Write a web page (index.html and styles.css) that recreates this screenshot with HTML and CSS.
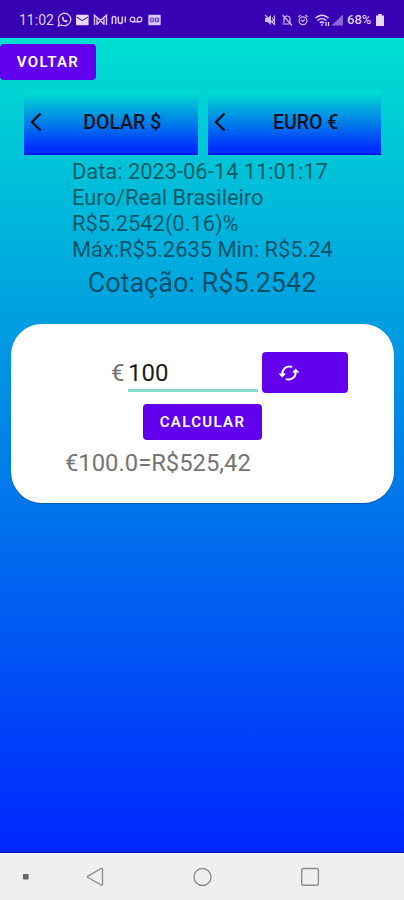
FILE: index.html
```html
<!DOCTYPE html>
<html lang="pt-BR">
  <head>
    <meta charset="UTF-8" />
    <meta name="viewport" content="width=device-width, initial-scale=1" />
    <title>Cotação</title>
    <link rel="stylesheet" href="styles.css">
  </head>

  <body>
    <header class="status">
      <span class="clock">11:02</span>
      <svg class="status-left" width="106" height="16" viewBox="0 0 106 16" fill="none" stroke="#d9c8f5" stroke-width="1.3">
        <!-- whatsapp -->
        <path d="M1.300 14l1-3.300a6.200 6.200 0 1 1 2.500 2.300z" />
        <path d="M5 5.200c-.6 2.800 2 5.400 5 5l.6-1.600-1.700-.8-.9.800-1.600-1.700.6-1-.7-1.400z" fill="#d9c8f5" stroke="none" />
        <!-- mail -->
        <rect x="19" y="2.700" width="12.600" height="10.600" rx="1" fill="#e4d9f8" stroke="none" />
        <path d="M19.500 5l5.800 3.600L31 5" stroke="#3700b3" stroke-width="1" />
        <!-- gmail -->
        <path d="M37.500 13V3.300l6 5 6-5V13M40 13V6.500M47 13V6.500M39.500 12.500l4-3.500 4 3.500" stroke-width="1.400" />
        <!-- nubank -->
        <path d="M55.300 12V6.500q0-2 1.700-2t1.700 2V12M61.300 4.500V9q0 2.400 2 2.400t2-2.400V4.500v6.700M68.300 4.500v6" stroke-width="1.500" />
        <!-- voicemail -->
        <circle cx="75.500" cy="7.500" r="2.300" />
        <circle cx="82.500" cy="7.500" r="2.300" />
        <path d="M75.500 9.800h7" />
        <!-- news -->
        <rect x="91.300" y="2.700" width="12.400" height="10.600" rx="1" fill="#d9c8f5" stroke="none" />
        <path d="M93.300 6h3.400v3.800h-3.400zM98.300 6h3.400v3.800h-3.400zM93.300 8h3M98.300 8h3" stroke="#5d32c0" stroke-width=".9" />
      </svg>
      <svg class="status-right" width="82" height="16" viewBox="0 0 82 16" fill="none" stroke="#cdb9f2" stroke-width="1.2">
        <!-- muted -->
        <path d="M1 6h2.500L7 3v10L3.500 10H1z" fill="#cdb9f2" stroke="none" />
        <path d="M1 3l10 10M8.500 5.500q1.500 2 0 4.500M10.500 3.500v9" />
        <!-- alerts off -->
        <path d="M18.500 12h9M20 11V7q0-3 3-3t3 3v4M18.500 3l9.500 10.500" />
        <!-- alarm -->
        <circle cx="39" cy="8.800" r="3.900" />
        <path d="M34.500 5l2-2M43.500 5l-2-2M37 8l2 1.500L41 7" />
        <!-- wifi -->
        <path d="M51.500 6q6.500-5.500 13 0M53.500 8.500q4.500-3.700 9 0M55.800 10.800q2.200-1.700 4.400 0" stroke="#e4d9f8" stroke-width="1.400" />
        <path d="M58 11.500v2.500M62 10v4M64.500 10v4" stroke="#e4d9f8" />
        <!-- signal -->
        <path d="M67.500 13.500L79 2.500v11z" fill="#8b68d6" stroke="none" />
      </svg>
      <span class="battery-level">68%</span>
      <svg class="battery" width="8" height="12" viewBox="0 0 8 12" fill="#e4d9f8">
        <path d="M2.300 0h3.400v1.500H8V12H0V1.500h2.300z" />
      </svg>
    </header>

    <main class="screen">
      <button type="button" class="btn back">VOLTAR</button>

      <div class="tabs">
        <button type="button" class="tab">
          <svg class="chevron" width="12" height="20" viewBox="0 0 12 20"><path d="M10.500 1.500L2 10l8.500 8.500" /></svg>
          <span class="tab-label">DOLAR $</span>
        </button>
        <button type="button" class="tab">
          <svg class="chevron" width="12" height="20" viewBox="0 0 12 20"><path d="M10.500 1.500L2 10l8.500 8.500" /></svg>
          <span class="tab-label">EURO €</span>
        </button>
      </div>

      <div class="info">
        <div>Data: 2023-06-14 11:01:17</div>
        <div>Euro/Real Brasileiro</div>
        <div>R$5.2542(0.16)%</div>
        <div>Máx:R$5.2635 Min: R$5.24</div>
      </div>
      <div class="rate">Cotação: R$5.2542</div>

      <section class="card">
        <div class="amount">
          <label for="valor">€</label>
          <input type="text" id="valor" name="valor" value="100" />
          <button type="button" class="btn swap" aria-label="Trocar">
            <svg width="22" height="18" viewBox="0 0 22 18" fill="none" stroke="#fff" stroke-width="2">
              <path d="M4.300 10.500C4 5 8.500 1.200 14.300 2.900M17.700 7.500C18 13 13.500 16.800 7.700 15.100" />
              <path d="M.5 9.500h7.600l-3.800 4zM13.900 8.500h7.600l-3.800-4z" fill="#fff" stroke="none" />
            </svg>
          </button>
        </div>
        <button type="button" class="btn calc">CALCULAR</button>
        <div class="result">€100.0=R$525,42</div>
      </section>
    </main>

    <nav class="navbar">
      <svg width="404" height="47" viewBox="0 0 404 47" fill="none" stroke="#8c8c8c" stroke-width="1.400">
        <rect x="23" y="21" width="5.500" height="5.500" fill="#666" stroke="none" />
        <path d="M101 15.500q1.500-.8 1.500 1v14.500q0 1.800-1.500 1L88 24.500q-1-.7 0-1.400z" />
        <circle cx="202.500" cy="24" r="8.500" />
        <rect x="301.700" y="15.500" width="16.700" height="16.700" rx="1.800" />
      </svg>
    </nav>
  </body>
</html>
```

FILE: styles.css
```css
* {
  box-sizing: border-box;
}

body {
  margin: 0;
  height: 900px;
  display: flex;
  flex-direction: column;
  overflow: hidden;
  font-family: Roboto, "Liberation Sans", sans-serif;
}

button {
  border: 0;
  padding: 0;
  font-family: inherit;
}

.status {
  height: 38px;
  display: flex;
  align-items: center;
  padding: 1px 20px 0 19px;
  background: #3700b3;
  color: #dccff6;
  font-size: 14px;
}

.clock {
  width: 38px;
}

.status-right {
  margin-left: auto;
}

.battery-level {
  width: 27px;
  margin: 0 2px 0 1px;
  font-size: 13px;
  font-weight: 500;
}

.screen {
  height: 815px;
  padding-top: 6px;
  background: linear-gradient(#00dfd1, #0026ff);
  border-bottom: 1px solid #0a14cc;
}

.btn {
  display: block;
  background: #6200ee;
  color: #fff;
  border-radius: 4px;
  font-size: 15px;
  font-weight: 600;
  letter-spacing: 1.35px;
}

.back {
  width: 96px;
  height: 36px;
}

.tabs {
  display: flex;
  gap: 10px;
  margin: 10px 23px 0 24px;
}

.tab {
  flex: 1;
  height: 65px;
  display: flex;
  align-items: center;
  padding: 2px 0 1px 6px;
  background: linear-gradient(#00dad2 5%, #0030ff 92%);
  border-bottom: 2px solid #0018e6;
  color: #06101f;
  font-size: 19.5px;
  font-weight: 500;
}

.chevron {
  fill: none;
  stroke: #06101f;
  stroke-width: 2.4;
}

.tab-label {
  flex: 1;
  padding-left: 5px;
}

.info {
  margin: 4px 0 0 72px;
  font-size: 21.85px;
  line-height: 26px;
  color: rgba(0, 0, 0, 0.54);
}

.rate {
  margin-top: 4px;
  text-align: center;
  font-size: 27px;
  line-height: 32px;
  color: rgba(0, 0, 0, 0.54);
}

.card {
  height: 179px;
  margin: 25px 10px 0 11px;
  padding-top: 28px;
  border-radius: 31px;
  background: #fff;
  box-shadow: 0 1px 1px rgba(0, 0, 0, 0.25);
}

.amount {
  display: flex;
  margin-left: 100px;
  font-size: 24px;
  color: #757575;
}

.amount label {
  width: 17px;
  line-height: 42px;
}

.amount input {
  width: 130px;
  height: 40px;
  padding: 4px 0 0 0;
  border: 0;
  border-bottom: 3px solid #85dccf;
  outline: 0;
  background: none;
  font: inherit;
  color: #1c1c1c;
}

.swap {
  width: 86px;
  height: 41px;
  margin-left: 4px;
  padding-left: 16px;
}

.swap svg {
  display: block;
}

.calc {
  width: 119px;
  height: 36px;
  margin: 10px 0 0 132px;
}

.result {
  margin: 9px 0 0 54px;
  font-size: 23.8px;
  line-height: 28px;
  color: #757575;
}

.navbar {
  flex: 1;
  background: #efefef;
}

.navbar svg {
  display: block;
}
```
